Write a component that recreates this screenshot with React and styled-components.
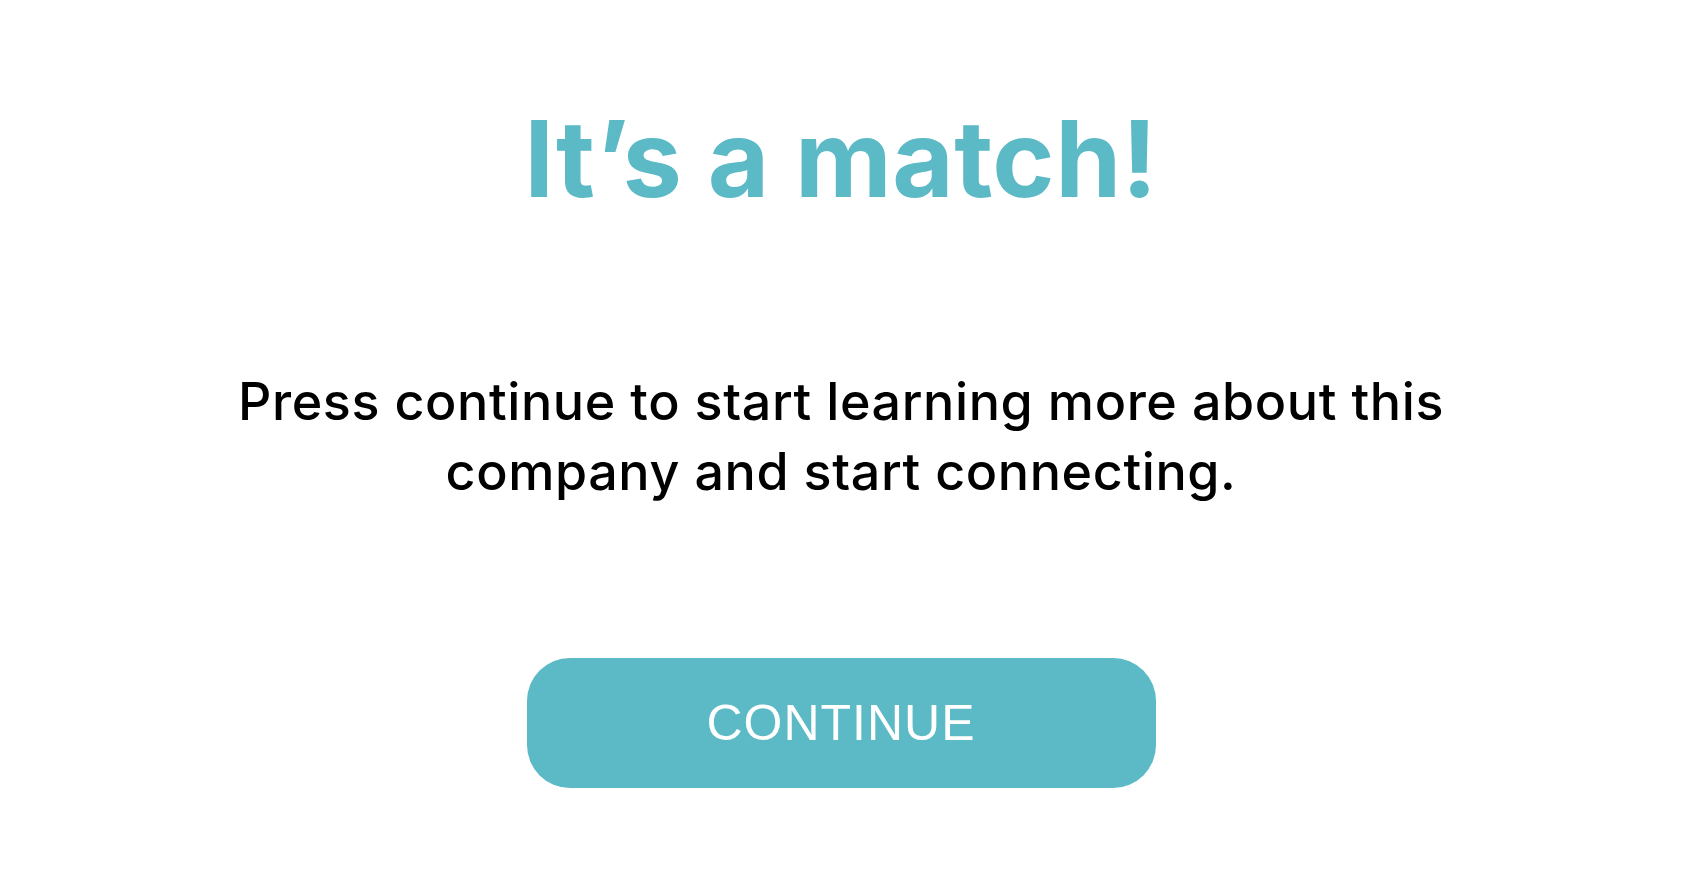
import styled, { createGlobalStyle } from 'styled-components';

const GlobalStyle = createGlobalStyle`
  html, body {
    margin: 0;
    padding: 0;
    background: #ffffff;
  }
`;

const Page = styled.div`
  display: flex;
  flex-direction: column;
  align-items: center;
  padding-top: 106px;
  min-height: 100vh;
  box-sizing: border-box;
  font-family: Inter, "Noto Sans", sans-serif;
`;

const Title = styled.h1`
  margin: 0;
  font-size: 106px;
  line-height: 1;
  font-weight: 700;
  letter-spacing: 0.4px;
  color: #5bbac6;
`;

const Message = styled.p`
  margin: 155px 0 0;
  font-size: 52px;
  line-height: 70px;
  font-weight: 500;
  letter-spacing: 0.6px;
  color: #000000;
  text-align: center;
  max-width: 1260px;
`;

const ContinueButton = styled.button`
  margin-top: 151px;
  width: 629px;
  height: 130px;
  border: none;
  border-radius: 43px;
  background-color: #5bbac6;
  color: #ffffff;
  font-family: "Liberation Sans", Arial, sans-serif;
  font-size: 50px;
  letter-spacing: 1px;
  cursor: pointer;
`;

const App = () => {
  return (
    <>
      <GlobalStyle />
      <Page>
        <Title>It’s a match!</Title>
        <Message>
          Press continue to start learning more about this company and start connecting.
        </Message>
        <ContinueButton type="button">CONTINUE</ContinueButton>
      </Page>
    </>
  );
};

export default App;
